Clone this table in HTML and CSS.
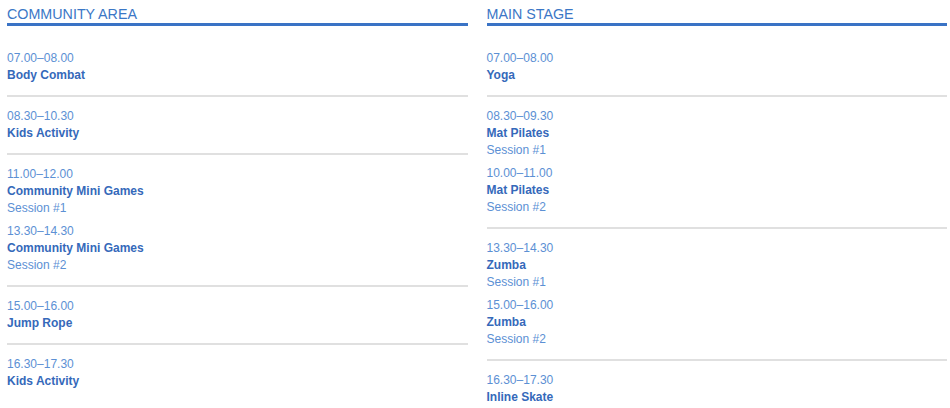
FILE: index.html
```html
<!DOCTYPE html>
<html>
<head>
<meta charset="utf-8">
<link rel="stylesheet" href="styles.css">
</head>
<body>
<div class="schedule">
  <section class="stage">
    <h2 class="stage-title">COMMUNITY AREA</h2>
    <div class="group">
      <div class="item"><div class="time">07.00–08.00</div><div class="name">Body Combat</div></div>
    </div>
    <div class="group">
      <div class="item"><div class="time">08.30–10.30</div><div class="name">Kids Activity</div></div>
    </div>
    <div class="group">
      <div class="item"><div class="time">11.00–12.00</div><div class="name">Community Mini Games</div><div class="note">Session #1</div></div>
      <div class="item"><div class="time">13.30–14.30</div><div class="name">Community Mini Games</div><div class="note">Session #2</div></div>
    </div>
    <div class="group">
      <div class="item"><div class="time">15.00–16.00</div><div class="name">Jump Rope</div></div>
    </div>
    <div class="group">
      <div class="item"><div class="time">16.30–17.30</div><div class="name">Kids Activity</div></div>
    </div>
  </section>
  <section class="stage">
    <h2 class="stage-title">MAIN STAGE</h2>
    <div class="group">
      <div class="item"><div class="time">07.00–08.00</div><div class="name">Yoga</div></div>
    </div>
    <div class="group">
      <div class="item"><div class="time">08.30–09.30</div><div class="name">Mat Pilates</div><div class="note">Session #1</div></div>
      <div class="item"><div class="time">10.00–11.00</div><div class="name">Mat Pilates</div><div class="note">Session #2</div></div>
    </div>
    <div class="group">
      <div class="item"><div class="time">13.30–14.30</div><div class="name">Zumba</div><div class="note">Session #1</div></div>
      <div class="item"><div class="time">15.00–16.00</div><div class="name">Zumba</div><div class="note">Session #2</div></div>
    </div>
    <div class="group">
      <div class="item"><div class="time">16.30–17.30</div><div class="name">Inline Skate</div></div>
    </div>
  </section>
</div>
</body>
</html>
```
FILE: styles.css
```css
html, body {
  margin: 0;
  padding: 0;
  background: #ffffff;
}
body {
  font-family: "Liberation Sans", Arial, sans-serif;
  overflow: hidden;
}
.schedule {
  display: grid;
  grid-template-columns: 1fr 1fr;
  column-gap: 19px;
  padding: 0 3px 0 7px;
}
.stage-title {
  margin: 0 0 13px 0;
  padding-top: 6px;
  font-size: 14.3px;
  line-height: 17px;
  font-weight: normal;
  color: #3b77c6;
  border-bottom: 3px solid #3a73c5;
}
.group {
  padding: 11px 0 11px 0;
  border-bottom: 2px solid #e0e0e0;
  display: flex;
  flex-direction: column;
  gap: 6px;
}
.group:last-child {
  border-bottom: none;
}
.item {
  font-size: 12px;
  line-height: 17px;
}
.time {
  color: #5c90d4;
}
.name {
  color: #3569ba;
  font-weight: bold;
}
.note {
  color: #5c90d4;
}
```
